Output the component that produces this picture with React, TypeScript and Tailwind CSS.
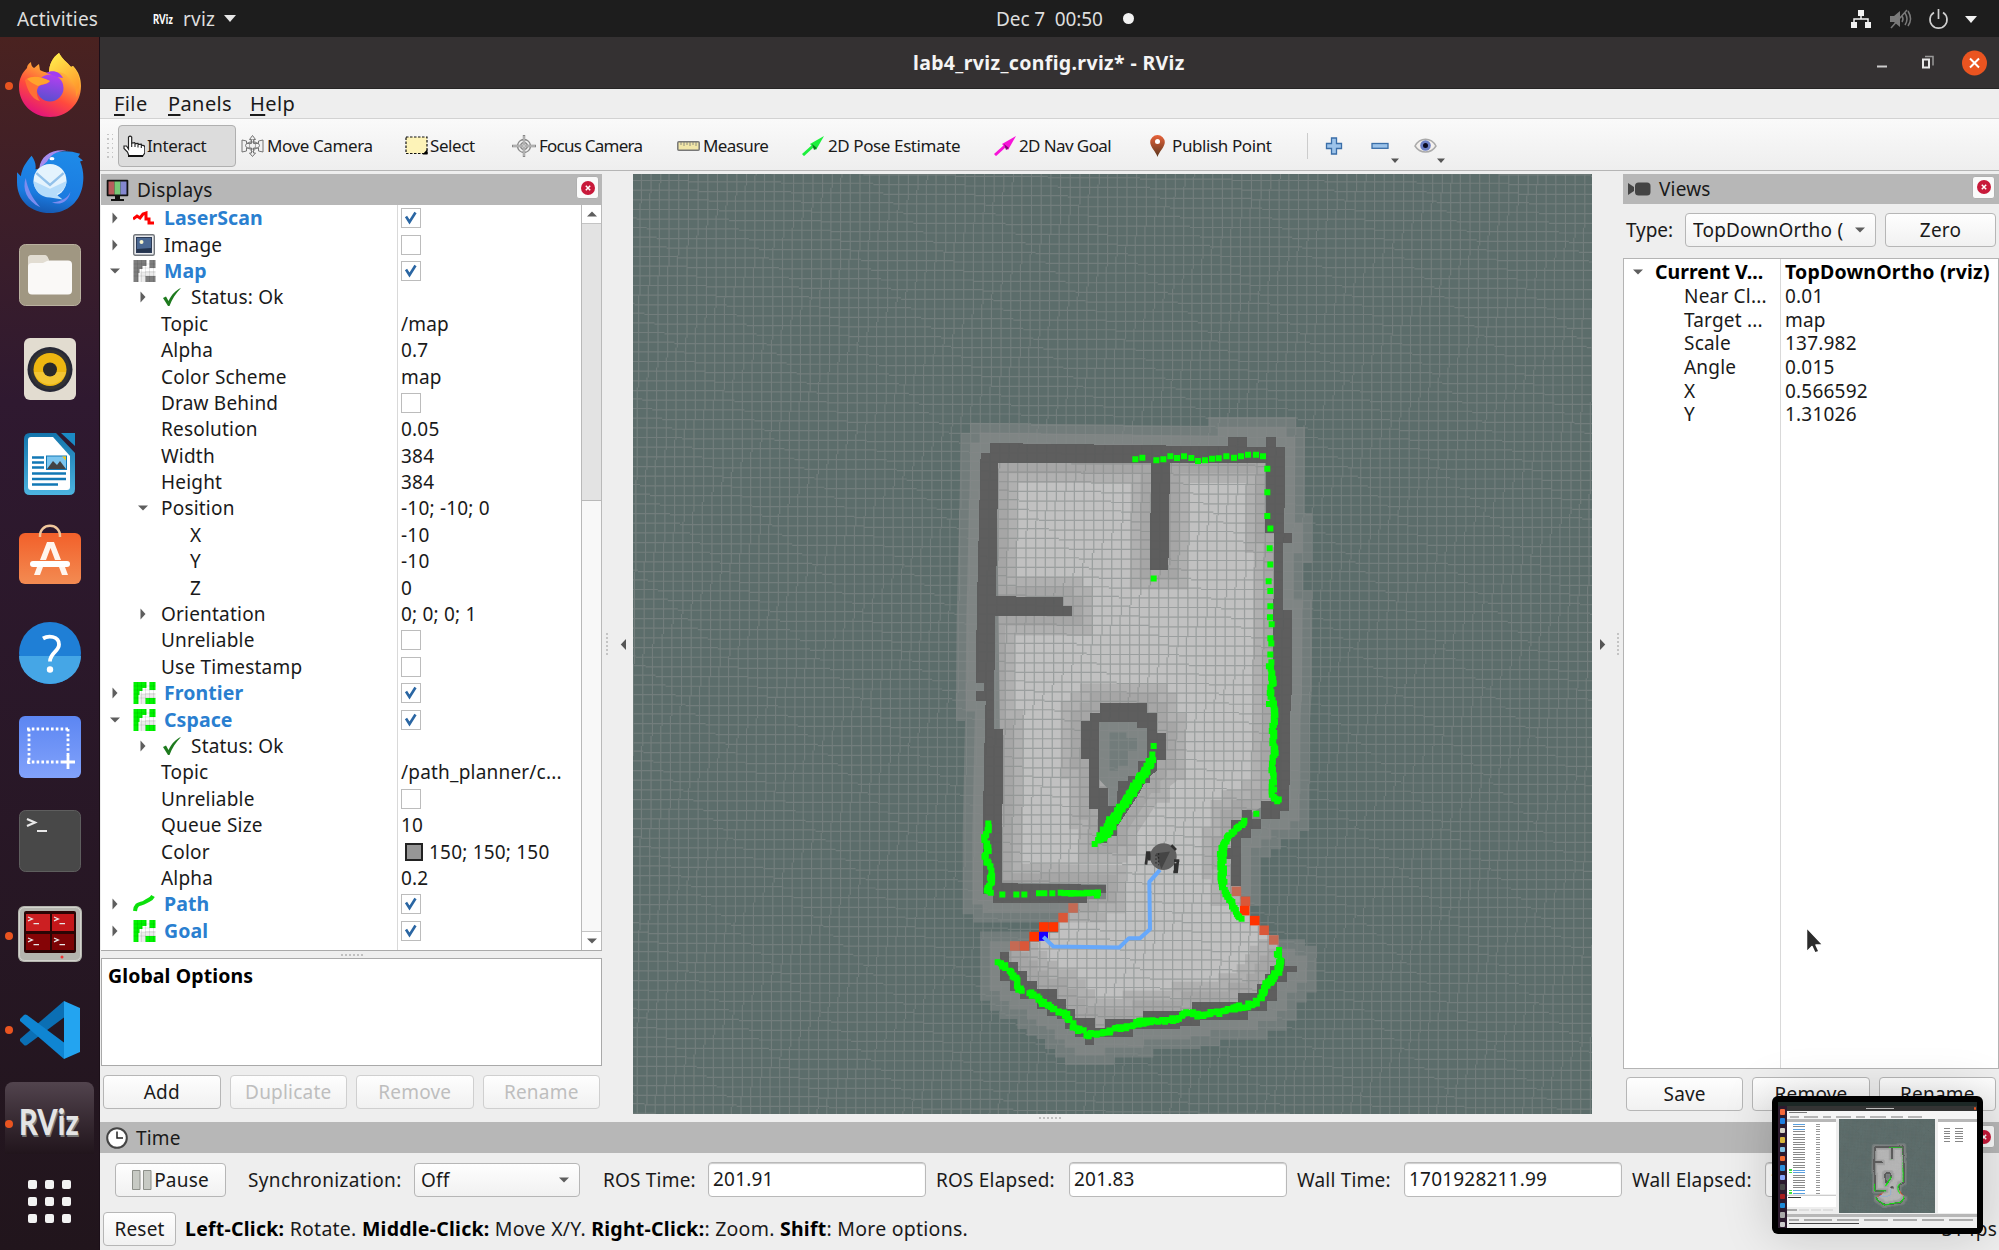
import React from "react";

const LASER_PATHS: { pts: number[][]; step: number; jitter: number }[] = [
  { pts: [[960, 790], [970, 850], [960, 880], [972, 930], [968, 1000], [974, 1060], [968, 1110], [970, 1195], [985, 1205]], step: 7, jitter: 10 },
  { pts: [[115, 1275], [106, 1310], [112, 1350], [105, 1370], [118, 1400], [124, 1440], [112, 1470], [118, 1485]], step: 7, jitter: 10 },
  { pts: [[333, 1482], [380, 1482], [445, 1481], [440, 1490]], step: 9, jitter: 3 },
  { pts: [[607, 1085], [570, 1140], [530, 1200], [490, 1260], [440, 1332]], step: 4, jitter: 16 },
  { pts: [[600, 1092], [555, 1165], [500, 1250], [462, 1318]], step: 4, jitter: 14 },
  { pts: [[885, 1267], [858, 1290], [838, 1308], [822, 1345], [814, 1390], [816, 1450], [830, 1490], [872, 1555]], step: 5, jitter: 8 },
  { pts: [[832, 1315], [815, 1360], [818, 1450]], step: 5, jitter: 14 },
  { pts: [[145, 1686], [195, 1735], [212, 1778]], step: 6, jitter: 10 },
  { pts: [[240, 1780], [290, 1820], [350, 1848], [372, 1880], [415, 1906], [475, 1898], [570, 1870], [690, 1860], [705, 1840], [755, 1850], [850, 1828], [915, 1815], [965, 1745], [993, 1690], [985, 1655]], step: 6, jitter: 12 },
  { pts: [[930, 1800], [950, 1750], [985, 1720]], step: 7, jitter: 8 },
];

const LASER_DOTS = [
  [556, 179], [577, 174], [619, 182], [640, 179], [661, 170], [681, 175], [702, 170], [724, 175], [744, 184], [765, 182],
  [786, 177], [806, 176], [829, 170], [852, 174], [873, 170], [894, 165], [918, 165], [939, 170], [952, 207], [952, 278],
  [952, 349], [961, 387], [959, 446], [961, 495], [956, 545], [961, 574], [961, 620], [960, 653], [965, 674], [961, 716],
  [964, 732], [961, 765], [611, 537], [611, 1040], [607, 1065], [919, 1243], [157, 1486], [199, 1486], [223, 1486],
  [267, 1482], [283, 1482], [307, 1482], [957, 914], [972, 912], [967, 849],
];

function laserSquares() {
  const out: number[][] = [...LASER_DOTS];
  let k = 0;
  for (const { pts, step, jitter } of LASER_PATHS) {
    for (let i = 0; i < pts.length - 1; i++) {
      const [x0, y0] = pts[i];
      const [x1, y1] = pts[i + 1];
      const n = Math.max(1, Math.round(Math.hypot(x1 - x0, y1 - y0) / step));
      for (let j = 0; j <= n; j++) {
        k++;
        const r1 = Math.abs((Math.sin(k * 12.9898) * 43758.5453) % 1) - 0.5;
        const r2 = Math.abs((Math.sin(k * 78.233) * 12543.123) % 1) - 0.5;
        out.push([x0 + ((x1 - x0) * j) / n + r1 * jitter, y0 + ((y1 - y0) * j) / n + r2 * jitter]);
      }
    }
  }
  return out.map(([x, y]) => `M${(x - 9).toFixed(1)} ${(y - 9).toFixed(1)}h18v18h-18z`).join("");
}

const LASER = laserSquares();

/* Lattice lines of a slightly rotated occupancy grid, stepped like unsmoothed raster lines. */
function gridLines() {
  const cell = 28.6;
  const slope = 0.015;
  const q = 4.15;
  const run = q / slope;
  let d = "";
  for (let i = -42; i <= 76; i++) {
    const phase = (((i * cell) / q) % 1) * run;
    for (let y = -1000 + phase - run; y < 2300; y += run) {
      const x = q * Math.round((i * cell - slope * (y + run / 2)) / q);
      d += `M${x.toFixed(1)} ${y.toFixed(1)}v${run.toFixed(1)}`;
    }
  }
  for (let j = -34; j <= 78; j++) {
    const phase = (((-j * cell) / q) % 1) * run;
    for (let x = -1200 + phase - run; x < 2200; x += run) {
      const y = q * Math.round((j * cell + slope * (x + run / 2)) / q);
      d += `M${x.toFixed(1)} ${y.toFixed(1)}h${run.toFixed(1)}`;
    }
  }
  return d;
}
const GRID = gridLines();

const WALLS = [
  "M120 130L835 140V112H892V142H948V112H978V142H1005L1003 400H1027V430H1000V632H1027L1025 880L1020 960L1018 1235H990V1260H933V1205H962L968 960L972 400H946L948 190L145 190L138 590L340 593V620H367V648H135L132 990H160L155 1452L468 1457V1482H410V1510H130V1485H98V1300L105 960L107 905H78V875H103V850H78L80 650L92 160H120Z",
  "M603 188L660 190L655 510H600Z",
  "M450 912H592V940H620V1000H648V1082H620V1115L600 1130V1150H585L560 1195L530 1240L500 1285V1310H472V1330H445V1230H417V1080H392V965H420V940H450ZM447 968H560V985H592V1085H565V1130H535V1145H505V1175H500V1220H475V1167H447Z",
  "M875 1233H905V1260H933V1290H903V1315H872V1460H842V1380H815V1345H842V1262H875Z",
  "M150 1657H178V1690H205V1715H232V1745H262V1770H320V1800H347V1830H375V1858H435V1888H465V1860H578V1835H725V1808H865V1782H920V1755H945V1725H960V1700H985V1680H1005V1700H1040V1720H1010V1750H980V1805H950V1835H893V1862H750V1880H690V1890H550V1915H433V1938H405V1915H375V1890H345V1860H320V1850H290V1830H262V1800H210V1775H180V1745H150Z",
];

const RED = [
  [845, 1462, "#c46a54"], [872, 1492, "#da5738"], [870, 1520, "#ff3300"], [900, 1550, "#ff3300"], [928, 1579, "#da5738"], [957, 1608, "#c46a54"],
  [355, 1512, "#c46a54"], [325, 1541, "#da5738"], [267, 1569, "#ff3300"], [296, 1569, "#ff3300"], [238, 1598, "#ff3300"], [180, 1626, "#c46a54"], [209, 1626, "#da5738"],
] as const;

function MapView({ id, className }: { id: string; className: string }) {
  return (
    <svg viewBox="633 174 959 941" className={className} preserveAspectRatio="none">
      <rect x="633" y="174" width="959" height="941" fill="#5c6d6b" />
      <g transform="translate(950 400) scale(0.33333)">
        <path
          fill="#c1c1c1"
          d="M140 185H945L948 400H974L968 1205L905 1240L845 1300L842 1460H872V1500H900V1550L930 1580L957 1608H985V1680L975 1700L920 1800L865 1830L725 1850L580 1875L465 1900H430L375 1860L345 1820L260 1785L205 1730L178 1690V1655H240V1627H268V1600H325V1570L355 1540H383V1500H468V1455L155 1450Z"
        />
        <path fill="#5c6d6b" d="M447 965H565L592 985V1085L565 1130L520 1180L500 1220L475 1250V1170L447 1140Z" />
        <path transform="translate(120 130)" d={GRID} stroke="#8d9492" strokeOpacity="0.55" strokeWidth="3.6" fill="none" />
        <g opacity="0.38">
          <g fill="#969696" stroke="#969696" strokeWidth="120" strokeLinejoin="miter" strokeMiterlimit="2">
            {WALLS.map((d) => <path key={id + d} d={d} />)}
          </g>
        </g>
        <g opacity="0.36">
          <g fill="#969696" stroke="#969696" strokeWidth="62" strokeLinejoin="miter" strokeMiterlimit="2" fillRule="evenodd">
            {WALLS.slice(1).map((d) => <path key={id + d} d={d} />)}
            <path d={WALLS[0]} />
          </g>
        </g>
        <g fill="#5e5e5e" fillRule="evenodd" shapeRendering="crispEdges">
          {WALLS.map((d) => <path key={id + d} d={d} />)}
          <path d="M1005 400h22v30h-22z" />
        </g>
        <path transform="translate(120 130)" d={GRID} stroke="#505656" strokeOpacity="0.1" strokeWidth="3.6" fill="none" />
        {RED.map(([x, y, c]) => <rect key={x + "-" + y} x={x} y={y} width="28.6" height="28.6" fill={c} />)}
        <rect x="267" y="1598" width="27" height="27" fill="#1a00ff" />
        <path d={LASER} fill="#00ff00" />
        <path d="M630 1412L598 1448L600 1590L570 1617H537L508 1645L310 1642L280 1613" fill="none" stroke="#66a8fb" strokeWidth="12" strokeLinejoin="round" />
        <circle cx="640" cy="1372" r="40" fill="#606060" />
        <path d="M618 1362L660 1357L634 1410Z" fill="#454545" />
        <path d="M618 1366v30M626 1362v36" stroke="#222" strokeWidth="3" strokeDasharray="5 6" />
        <path d="M588 1396l4-36h10M598 1362v22M664 1338l14 14M672 1384h16M684 1380l-4 38h-10M676 1392v24" fill="none" stroke="#303030" strokeWidth="8" />
      </g>
    </svg>
  );
}

/* ---------- dock icons ---------- */

const Firefox = () => (
  <svg viewBox="0 0 64 78" className="-mt-[3px] h-[78px] w-[64px]">
    <defs>
      <linearGradient id="ffb" x1="0.8" y1="0" x2="0.3" y2="1">
        <stop offset="0" stopColor="#fff44f" /><stop offset="0.35" stopColor="#ffa436" /><stop offset="0.65" stopColor="#ff4a3d" /><stop offset="1" stopColor="#e0107f" />
      </linearGradient>
      <linearGradient id="ffp" x1="0.6" y1="0" x2="0.4" y2="1"><stop offset="0" stopColor="#b33ff0" /><stop offset="1" stopColor="#5a4fcf" /></linearGradient>
      <linearGradient id="ffy" x1="0" y1="0" x2="0.5" y2="1"><stop offset="0" stopColor="#fff44f" /><stop offset="1" stopColor="#ff9a2c" /></linearGradient>
    </defs>
    <path d="M41 7c3 6 8 9 12 14l2-1c6 6 8 13 8 20c0 18-14 31-31 31S1 58 1 41c0-8 3-14 8-19c0-2 1-4 4-6c0 3 1 5 3 6c2-1 3-3 5-4l1 6c2 1 7 3 9 3c0-8 3-15 10-20Z" fill="url(#ffb)" />
    <path d="M41 7c3 6 8 9 12 14l2-1c7 8 9 20 3 31c1-10-3-16-8-20c-3-4-7-6-19-4c0-8 3-15 10-20Z" fill="url(#ffy)" />
    <circle cx="32" cy="42" r="13.500" fill="url(#ffp)" />
    <path d="M28 27c7-4 14-1 17 5l-6-1c-4-2-8-3-11-4Z" fill="#a23df0" />
    <path d="M7 34c4-5 14-4 25 1c-3 4-8 3-11 5c-3 4-3 10 1 15c-9-2-13-12-15-21Z" fill="#ff6f35" />
    <path d="M9 33c6-4 15-2 23 2c-4 4-9 3-12 5c-4-2-8-4-11-7Z" fill="#ffa32c" />
  </svg>
);

const Thunderbird = () => (
  <svg viewBox="0 0 70 68" className="h-[66px] w-[68px]">
    <defs><linearGradient id="tb" x1="0.6" y1="0" x2="0.4" y2="1"><stop offset="0" stopColor="#1e8ae8" /><stop offset="0.7" stopColor="#1b7be0" /><stop offset="1" stopColor="#1558b0" /></linearGradient></defs>
    <path d="M66 6l-2 3l5 4l-3 1c3 7 4 14 3 22c-2 19-16 31-34 31C15 67 1 54 1 35V25l4 4c1-8 5-14 11-21c3 4 5 9 4 14l5-1C27 7 44-1 66 6Z" fill="url(#tb)" />
    <path d="M24 21C25 8 38 0 54 3c-12-1-19 5-22 11Z" fill="#a58bee" />
    <path d="M10 31c-4 11 1 24 15 30c-9-10-13-19-15-30ZM56 45c-2 6-9 10-19 11c9 4 18-2 19-11Z" fill="#7c8df0" />
    <circle cx="35" cy="33.500" r="17" fill="#e4f3fd" />
    <path d="M18 34a17 17 0 0 0 17 17l13 2c-4-3-7-5-5-6c6-3 9-8 9-13l-17 8Z" fill="#b5dcfa" />
    <path d="M21 26l14 12l14-12" fill="none" stroke="#92c1ea" strokeWidth="2.400" />
    <ellipse cx="37" cy="11" rx="2.600" ry="1.600" fill="#fff" />
  </svg>
);

const Files = () => (
  <svg viewBox="0 0 62 62" className="h-[62px] w-[62px]">
    <rect x="0.500" y="0.500" width="61" height="61" rx="6" fill="#a09782" stroke="#b9b19f" />
    <path d="M9 15q0-4 4-4h12q3 0 4 3l1 3h20v10H9Z" fill="#e2ddd2" />
    <rect x="9" y="16.500" width="44" height="34" rx="4" fill="#faf9f7" />
    <path d="M9 22V14q0-3 4-3h12q3 0 4 3l1 2-6 3H13q-4 0-4 4Z" fill="#e2ddd2" />
  </svg>
);

const Rhythmbox = () => (
  <svg viewBox="0 0 52 62" className="h-[62px] w-[52px]">
    <rect width="52" height="62" rx="6" fill="#e2dcd0" />
    <circle cx="26" cy="31.500" r="22.500" fill="#272835" /><circle cx="26" cy="31.500" r="20" fill="#333" />
    <circle cx="26" cy="31.500" r="16.500" fill="#eeb710" /><path d="M10 34a16.500 16.500 0 0 0 32 0Z" fill="#f6d04c" opacity="0.6" />
    <circle cx="26" cy="31.500" r="7" fill="#2a2a2a" />
  </svg>
);

const Writer = () => (
  <svg viewBox="0 0 52 62" className="h-[62px] w-[52px]">
    <defs><linearGradient id="wr" x1="0" y1="0" x2="0" y2="1"><stop offset="0" stopColor="#1374ab" /><stop offset="1" stopColor="#4db4e0" /></linearGradient></defs>
    <path d="M6 0H32L51 20V56q0 6-6 6H6q-6 0-6-6V6q0-6 6-6Z" fill="url(#wr)" />
    <path d="M37 0h14v13Z" fill="#1b8ac4" />
    <path d="M7 4H29L46 23V54q0 3-3 3H7q-3 0-3-3V7q0-3 3-3Z" fill="#fff" />
    <path d="M8 24.500h12M8 29.500h12M8 34.500h12M8 40.500h34M8 46h34M8 51.500h26" stroke="#1278b5" strokeWidth="2.400" />
    <rect x="22.500" y="23" width="20" height="13.500" fill="#7cc6ef" stroke="#1278b5" /><path d="M23 36l6-8l4 4l3-4l6 8Z" fill="#444" /><path d="M38 23.500h4v4Z" fill="#f5c518" />
  </svg>
);

const Software = () => (
  <svg viewBox="0 0 62 60" className="-mt-[9px] h-[60px] w-[62px]">
    <defs><linearGradient id="sw" x1="0" y1="0" x2="0" y2="1"><stop offset="0" stopColor="#f2602a" /><stop offset="1" stopColor="#f38b52" /></linearGradient></defs>
    <rect y="9" width="62" height="51" rx="6" fill="url(#sw)" />
    <path d="M21 13C20-2 42-2 41 13" fill="none" stroke="#f0c79c" strokeWidth="2.500" />
    <path d="M28 18h7L42 36h-6l-4.500-12L27 36h-6ZM18 43h6l-3 8h-6ZM40 43h6l3 8h-6Z" fill="#fff5ee" />
    <rect x="11" y="37" width="40" height="6" rx="3" fill="#fff" />
  </svg>
);

const Help = () => (
  <svg viewBox="0 0 62 62" className="h-[62px] w-[62px]">
    <circle cx="31" cy="31" r="31" fill="#1f7fd6" /><path d="M0 34a31 28 0 0 0 62 0Z" fill="#45a6e6" />
    <path d="M24 16.500c5-3 16-3 16 6c0 7-9 8-9 17" fill="none" stroke="#fff" strokeWidth="3.800" /><circle cx="31" cy="47.500" r="3.200" fill="#fff" />
  </svg>
);

const Shot = () => (
  <svg viewBox="0 0 62 62" className="h-[62px] w-[62px]">
    <defs><linearGradient id="sh" x1="0" y1="0" x2="0" y2="1"><stop offset="0" stopColor="#5c86f2" /><stop offset="1" stopColor="#82a2fb" /></linearGradient></defs>
    <rect width="62" height="62" rx="6" fill="url(#sh)" />
    <path d="M8 13H50M10 13V48M49 13V40M8 46H42" stroke="#fff" strokeWidth="2.800" strokeDasharray="2.600 2.200" fill="none" />
    <path d="M49 39v14M42 46h14" stroke="#fff" strokeWidth="2.800" />
  </svg>
);

const Prompt = ({ x, y, s = 1 }: { x: number; y: number; s?: number }) => (
  <path transform={`translate(${x} ${y}) scale(${s})`} d="M0 0l8 3.500l-8 3.500M10 12h10" fill="none" stroke="#e8e8e8" strokeWidth="2.200" />
);

const Terminal = () => (
  <svg viewBox="0 0 62 62" className="h-[62px] w-[62px]">
    <rect x="0.500" y="0.500" width="61" height="61" rx="6" fill="#484848" stroke="#5e5e5e" /><Prompt x={8} y={9} />
  </svg>
);

const Terminator = () => (
  <svg viewBox="0 0 64 56" className="-mt-[4px] h-[56px] w-[64px]">
    <rect width="64" height="56" rx="6" fill="#b4b5ae" /><rect x="1.500" y="1.500" width="61" height="53" rx="5" fill="none" stroke="#d4d4cf" />
    <rect x="6" y="5" width="52" height="42" rx="2" fill="#2b0505" />
    <rect x="8" y="8" width="24" height="17" fill="#cc1f22" /><rect x="34" y="8" width="22" height="17" fill="#c5171a" />
    <rect x="8" y="28" width="24" height="16" fill="#850406" /><rect x="34" y="28" width="22" height="16" fill="#7c0305" />
    <Prompt x={10} y={11} s={0.55} /><Prompt x={36} y={11} s={0.55} /><Prompt x={10} y={32} s={0.55} /><Prompt x={36} y={32} s={0.55} />
    <circle cx="44" cy="51" r="1.500" fill="#e33" />
  </svg>
);

const VsCode = () => (
  <svg viewBox="0 0 60 60" className="h-[60px] w-[60px]">
    <path d="M44 1L0 39q-1 1 0 2l4 4q1 1 3 0L46 16Z" fill="#0b6fb4" />
    <path d="M44 59L0 21q-1-1 0-2l4-4q1-1 3 0L46 44Z" fill="#0f85d2" />
    <path d="M44 1L60 8V52L44 59Z" fill="#23a4f0" />
  </svg>
);

const RvizIcon = () => (
  <svg viewBox="-6 -10 76 60" className="h-[60px] w-[76px]">
    <g fontFamily="Lato" fontWeight="900">
      <text x="2" y="33" fontSize="36" fill="#777" textLength="60" lengthAdjust="spacingAndGlyphs">RViz</text>
      <text x="1" y="31" fontSize="36" fill="#e4e4e4" textLength="60" lengthAdjust="spacingAndGlyphs">RViz</text>
    </g>
  </svg>
);

const DOCK: { el: React.ReactNode; run?: boolean; active?: boolean }[] = [
  { el: <Firefox />, run: true }, { el: <Thunderbird /> }, { el: <Files /> }, { el: <Rhythmbox /> }, { el: <Writer /> }, { el: <Software /> },
  { el: <Help /> }, { el: <Shot /> }, { el: <Terminal /> }, { el: <Terminator />, run: true }, { el: <VsCode />, run: true }, { el: <RvizIcon />, run: true, active: true },
];

function Dock() {
  return (
    <div className="flex h-full w-[100px] shrink-0 flex-col items-center border-r border-[#1b0f18] bg-linear-to-b from-[#4a2220] from-0% via-[#2f1930] via-30% to-[#21151c] pt-[2px]">
      {DOCK.map((d, i) => (
        <div key={i} className="relative flex h-[94.4px] w-full shrink-0 items-center justify-center">
          {d.active && <div className="absolute inset-x-[5px] top-[5px] h-[72px] rounded-t-lg bg-linear-to-b from-[#52444e] to-[#21151c]" />}
          <div className="relative">{d.el}</div>
          {d.run && <div className="absolute left-[5px] top-[43px] size-[8px] rounded-full bg-[#e95420]" />}
        </div>
      ))}
      <div className="mt-[8px] grid grid-cols-3 gap-[8px]">
        {Array.from({ length: 9 }, (_, i) => <div key={i} className="size-[9px] rounded-[2px] bg-[#f2f2f2]" />)}
      </div>
    </div>
  );
}

/* ---------- small widgets ---------- */

const Tri = ({ open, className = "" }: { open?: boolean; className?: string }) => (
  <svg viewBox="0 0 12 12" className={"size-[12px] shrink-0 " + className}>
    <path d={open ? "M1 3.500h10l-5 5z" : "M3.500 0.500v11l5-5.500z"} fill="#5e5e5e" />
  </svg>
);

const Check = ({ on }: { on: boolean }) => (
  <span className="flex size-[20px] items-center justify-center border border-[#bcbcbc] bg-white">
    {on && <svg viewBox="0 0 16 16" className="size-[16px]"><path d="M3 6.500L6.500 12L12.500 2.500" fill="none" stroke="#2a66a3" strokeWidth="2.600" /></svg>}
  </span>
);

const GridIcon = ({ c }: { c: string }) => (
  <svg viewBox="0 0 22 22" className="h-[22px] w-[23px]">
    <path d="M12 11h10v6H12zM9 12h3v10H6v-9z" fill="#ececec" />
    <path d="M0 0h13v6H9v3H6v4H5v9H0zM16 0h6v8h-6zM12 16h10v6H12z" fill={c} />
    <path d="M4 0v22M8 0v22M12 0v22M16 0v22M20 0v22M0 4h22M0 8h22M0 12h22M0 16h22" stroke="#000" strokeOpacity="0.13" strokeWidth="0.700" />
  </svg>
);
const LaserIcon = () => <svg viewBox="0 0 23 14" className="h-[14px] w-[23px]"><path d="M0 8l4-3l3 2l3-4l3-1v6l3 0v4h5" fill="none" stroke="#f00" strokeWidth="3" /></svg>;
const ImageIcon = () => (
  <svg viewBox="0 0 22 22" className="size-[22px]"><rect x="0.700" y="0.700" width="20.600" height="20.600" rx="1.500" fill="#e9ebee" stroke="#73777c" strokeWidth="1.400" /><rect x="3.500" y="3.500" width="15" height="15" fill="#4a6791" stroke="#2b3a56" /><circle cx="8.500" cy="8" r="2" fill="#f7f3ce" /><path d="M4 18v-3l14-1v4z" fill="#24344e" /></svg>
);
const PathIcon = () => <svg viewBox="0 0 22 20" className="h-[20px] w-[22px]"><path d="M2 17C3 8 8 11 12 8S18 6 20 2" fill="none" stroke="#0be00b" strokeWidth="4" /></svg>;
const OkIcon = () => <svg viewBox="0 0 18 18" className="size-[18px]"><path d="M0 10l3-1.500l2.500 4.500C9 6 13 2 18 0C13 5 9 11 6.500 18H5z" fill="#1e7a1e" /></svg>;

const CloseBtn = ({ className = "" }: { className?: string }) => (
  <span className={"flex h-[23px] w-[23px] shrink-0 items-center justify-center rounded-[3px] border border-[#b0b0b0] bg-[#fafafa] " + className}>
    <svg viewBox="0 0 14 14" className="size-[14px]"><circle cx="7" cy="7" r="7" fill="#c8193a" /><path d="M4.800 4.800l4.400 4.400M9.200 4.800l-4.400 4.400" stroke="#fff" strokeWidth="1.500" /></svg>
  </span>
);

const Btn = ({ children, off, className = "" }: { children: React.ReactNode; off?: boolean; className?: string }) => (
  <div className={"flex h-[34px] items-center justify-center rounded-[4px] border bg-linear-to-b from-[#fefefe] to-[#f1f1f1] " + (off ? "border-[#cfcfcf] text-[#bebebe] " : "border-[#b6b6b6] text-[#1a1a1a] ") + className}>
    {children}
  </div>
);

/* ---------- displays tree ---------- */

type Row = { t: string; lvl: number; icon?: React.ReactNode; open?: boolean; arrow?: boolean; link?: boolean; v?: string; chk?: boolean; swatch?: boolean };
const ROWS: Row[] = [
  { t: "LaserScan", lvl: 0, icon: <LaserIcon />, arrow: true, link: true, chk: true },
  { t: "Image", lvl: 0, icon: <ImageIcon />, arrow: true, chk: false },
  { t: "Map", lvl: 0, icon: <GridIcon c="#7d7d7d" />, arrow: true, open: true, link: true, chk: true },
  { t: "Status: Ok", lvl: 1, icon: <OkIcon />, arrow: true },
  { t: "Topic", lvl: 1, v: "/map" },
  { t: "Alpha", lvl: 1, v: "0.7" },
  { t: "Color Scheme", lvl: 1, v: "map" },
  { t: "Draw Behind", lvl: 1, chk: false },
  { t: "Resolution", lvl: 1, v: "0.05" },
  { t: "Width", lvl: 1, v: "384" },
  { t: "Height", lvl: 1, v: "384" },
  { t: "Position", lvl: 1, v: "-10; -10; 0", arrow: true, open: true },
  { t: "X", lvl: 2, v: "-10" },
  { t: "Y", lvl: 2, v: "-10" },
  { t: "Z", lvl: 2, v: "0" },
  { t: "Orientation", lvl: 1, v: "0; 0; 0; 1", arrow: true },
  { t: "Unreliable", lvl: 1, chk: false },
  { t: "Use Timestamp", lvl: 1, chk: false },
  { t: "Frontier", lvl: 0, icon: <GridIcon c="#00f400" />, arrow: true, link: true, chk: true },
  { t: "Cspace", lvl: 0, icon: <GridIcon c="#00f400" />, arrow: true, open: true, link: true, chk: true },
  { t: "Status: Ok", lvl: 1, icon: <OkIcon />, arrow: true },
  { t: "Topic", lvl: 1, v: "/path_planner/c..." },
  { t: "Unreliable", lvl: 1, chk: false },
  { t: "Queue Size", lvl: 1, v: "10" },
  { t: "Color", lvl: 1, v: "150; 150; 150", swatch: true },
  { t: "Alpha", lvl: 1, v: "0.2" },
  { t: "Path", lvl: 0, icon: <PathIcon />, arrow: true, link: true, chk: true },
  { t: "Goal", lvl: 0, icon: <GridIcon c="#00f400" />, arrow: true, link: true, chk: true },
];

const PAD = ["pl-[8px]", "pl-[36px]", "pl-[64px]"];

function TreeRow({ r }: { r: Row }) {
  return (
    <div className="flex h-[26.4px] items-center">
      <div className={"flex h-full w-[297px] shrink-0 items-center border-r border-[#d9d9d9] " + PAD[r.lvl]}>
        <span className="flex w-[13px] shrink-0">{r.arrow && <Tri open={r.open} />}</span>
        {r.lvl === 0 && <span className="ml-[11px] flex w-[31px] shrink-0">{r.icon}</span>}
        {r.lvl === 1 && <span className={"ml-[11px] flex shrink-0 " + (r.icon ? "w-[30px] pl-[2px]" : "w-0")}>{r.icon}</span>}
        {r.lvl === 2 && <span className="w-[12px]" />}
        <span className={r.link ? "text-[19.5px] font-bold tracking-[0.1px] text-[#2a7fd0]" : ""}>{r.t}</span>
      </div>
      <div className="flex items-center whitespace-nowrap pl-[3px]">
        {r.chk !== undefined && <Check on={r.chk} />}
        {r.swatch && <span className="ml-[4px] mr-[6px] size-[18px] border-2 border-[#222] bg-[#969696]" />}
        {r.v}
      </div>
    </div>
  );
}

function Displays() {
  return (
    <div className="flex w-[501px] shrink-0 flex-col">
      <div className="flex h-[31px] shrink-0 items-center bg-[#b7b7b7] pl-[5px] pr-[3px]">
        <svg viewBox="0 0 23 22" className="h-[22px] w-[23px]">
          <rect x="0.700" y="0.700" width="21.600" height="16.600" rx="1" fill="#111" /><rect x="2.500" y="2.500" width="6" height="13" fill="#b75c5c" /><rect x="8.500" y="2.500" width="6" height="13" fill="#76c876" /><rect x="14.500" y="2.500" width="6" height="13" fill="#8487cf" /><path d="M9 17h5v3h4v2H5v-2h4z" fill="#111" />
        </svg>
        <span className="ml-[8px] flex-1">Displays</span>
        <CloseBtn className="-mt-[4px]" />
      </div>
      <div className="flex h-[746px] shrink-0 border-b border-[#a9a9a9] bg-white">
        <div className="w-[480px] overflow-hidden">
          <div className="h-[739.200px]">{ROWS.map((r, i) => <TreeRow key={i} r={r} />)}</div>
          <div className="h-[8px] w-[297px] border-r border-[#d9d9d9]" />
        </div>
        <div className="flex flex-1 flex-col border-x border-[#b9b9b9] bg-[#f8f8f8]">
          <div className="flex h-[19px] items-center justify-center border-b border-[#c4c4c4] bg-white"><Tri open className="rotate-180" /></div>
          <div className="h-[277px] border-b border-[#b9b9b9] bg-[#e3e3e3]" />
          <div className="flex-1" />
          <div className="flex h-[19px] items-center justify-center border-t border-[#c4c4c4] bg-white"><Tri open /></div>
        </div>
      </div>
      <div className="flex h-[7px] items-center justify-center gap-[2px]">{Array.from({ length: 6 }, (_, i) => <i key={i} className="size-[2px] bg-[#c0c0c0]" />)}</div>
      <div className="h-[108px] shrink-0 border border-[#a9a9a9] bg-white px-[6px] pt-[5px] text-[19.5px] font-bold tracking-[0.1px] text-black">Global Options</div>
      <div className="flex gap-[9px] pl-[2px] pr-[2px] pt-[9px]">
        <Btn className="flex-1">Add</Btn><Btn off className="flex-1">Duplicate</Btn><Btn off className="flex-1">Remove</Btn><Btn off className="flex-1">Rename</Btn>
      </div>
    </div>
  );
}

const VIEW_ROWS = [["Near Cl...", "0.01"], ["Target ...", "map"], ["Scale", "137.982"], ["Angle", "0.015"], ["X", "0.566592"], ["Y", "1.31026"]];

function Views() {
  return (
    <div className="flex w-[376px] shrink-0 flex-col">
      <div className="flex h-[30px] shrink-0 items-center bg-[#b7b7b7] pl-[5px] pr-[4px]">
        <svg viewBox="0 0 23 14" className="h-[14px] w-[23px]"><path d="M0 1l6 4V9L0 13z" fill="#444" /><rect x="7" y="0.500" width="15.500" height="13" rx="3.500" fill="#444" /></svg>
        <span className="ml-[8px] flex-1">Views</span>
        <CloseBtn className="-mt-[4px]" />
      </div>
      <div className="mt-[9px] flex items-center pl-[3px] pr-[3px]">
        <span className="w-[59px] tracking-[-0.1px]">Type:</span>
        <Btn className="w-[191px] pl-[7px] pr-[9px]"><span className="w-[154px] overflow-hidden whitespace-nowrap">TopDownOrtho (</span><Tri open className="ml-auto" /></Btn>
        <Btn className="ml-[9px] flex-1">Zero</Btn>
      </div>
      <div className="mt-[11px] flex h-[811px] shrink-0 border border-[#b4b4b4] bg-white">
        <div className="w-[157px] border-r border-[#d9d9d9] pt-[1px]">
          <div className="flex h-[24.500px] items-center whitespace-nowrap pl-[8px] text-[19.5px] font-bold tracking-[0px] text-black"><Tri open /><span className="ml-[11px]">Current V...</span></div>
          {VIEW_ROWS.map((r) => <div key={r[0]} className="flex h-[23.600px] items-center pl-[60px]">{r[0]}</div>)}
        </div>
        <div className="pl-[4px] pt-[1px]">
          <div className="flex h-[24.500px] items-center whitespace-nowrap text-[19.5px] font-bold tracking-[0.2px] text-black">TopDownOrtho (rviz)</div>
          {VIEW_ROWS.map((r) => <div key={r[0]} className="flex h-[23.600px] items-center">{r[1]}</div>)}
        </div>
      </div>
      <div className="mt-[8px] flex gap-[9px] pl-[3px] pr-[3px]">
        <Btn className="flex-1">Save</Btn><Btn className="flex-1">Remove</Btn><Btn className="flex-1">Rename</Btn>
      </div>
    </div>
  );
}

function Handle({ side }: { side: "l" | "r" }) {
  const dots = <div className="flex flex-col gap-[2px]">{Array.from({ length: 6 }, (_, i) => <i key={i} className="size-[2px] bg-[#c4c4c4]" />)}</div>;
  return (
    <div className={"flex shrink-0 items-center justify-between " + (side === "l" ? "w-[31px] pl-[4px] pr-[7px]" : "w-[31px] pl-[8px] pr-[4px]")}>
      {side === "l" && dots}
      <svg viewBox="0 0 8 10" className={"h-[11px] w-[6px] " + (side === "l" ? "" : "-scale-x-100")} preserveAspectRatio="none"><path d="M8 0v10L1 5z" fill="#555" /></svg>
      {side === "r" && dots}
    </div>
  );
}

/* ---------- toolbar ---------- */

const arrowIcon = (a: string, b: string) => (
  <svg viewBox="0 0 22 20" className="h-[20px] w-[22px]"><path d="M1 19L11 10" stroke={a} strokeWidth="3" /><path d="M8 8L22 0L14 14z" fill={a} /><path d="M10 8l5 4l-3 2z" fill={b} /></svg>
);

function Toolbar() {
  const tool = (w: string, icon: React.ReactNode, label: string, gap: string) => (
    <div className={"flex items-center " + w}>{icon}<span className={gap + " whitespace-nowrap"}>{label}</span></div>
  );
  return (
    <div className="flex h-[53px] shrink-0 items-center border-b border-t border-b-[#b5b5b5] border-t-[#d2d2d2] bg-linear-to-b from-[#fafafa] to-[#eeeeee] pt-[2px] text-[17px] tracking-[-0.4px]">
      <div className="ml-[7px] grid grid-cols-2 gap-[3px]">{Array.from({ length: 12 }, (_, i) => <i key={i} className="size-[1.500px] bg-[#c6c6c6]" />)}</div>
      <div className="ml-[5px] flex h-[42px] w-[118px] items-center rounded-[4px] border border-[#b0b0b0] bg-[#dcdcdc] pl-[4px]">
        <svg viewBox="0 0 22 22" className="size-[22px]">
          <path d="M5.500 14V2.200q1.600-2.200 3.200 0V8l3-0.300l0.500 1l2.800-0.300l0.500 1l2.800-0.200l0.500 1.200q2.500-0.500 3 1.600v6l-2 3H6l-1.500-4L1 13.500V11h2.500z" fill="#fff" stroke="#222" strokeWidth="1.200" />
          <path d="M8.700 8v4M12 9v3M15 9.500v3M18.300 10v3" stroke="#222" strokeWidth="1.100" /><path d="M5 21h15" stroke="#111" strokeWidth="2" />
        </svg>
        <span className="ml-[2px]">Interact</span>
      </div>
      {tool("ml-[5px] w-[164px]", (
        <svg viewBox="0 0 23 22" className="h-[22px] w-[23px]">
          <path d="M11.500 0.500l3 4h-2v4h5V6l4.500-1v12l-4.500-1v-3h-5v5h2l-3 3.500l-3-3.500h2v-5h-5v3L1 17V5l4.500 1v2.500h5v-4h-2z" fill="#f2f2f2" stroke="#666" strokeWidth="0.900" /><ellipse cx="11.500" cy="10.500" rx="7" ry="3.500" fill="none" stroke="#777" /><ellipse cx="11.500" cy="10.500" rx="3" ry="6" fill="none" stroke="#888" strokeWidth="0.800" />
        </svg>
      ), "Move Camera", "ml-[3px]")}
      {tool("w-[107px]", <svg viewBox="0 0 23 19" className="h-[19px] w-[23px]"><rect x="1" y="1" width="21" height="16.500" fill="#fdf3b8" stroke="#111" strokeWidth="1.200" strokeDasharray="2.500 1.500" /><path d="M22.500 13v5.500h-5z" /></svg>, "Select", "ml-[2px]")}
      {tool("w-[165px]", (
        <svg viewBox="0 0 24 22" className="h-[22px] w-[24px]"><g fill="none" stroke="#888" strokeWidth="1.300"><circle cx="12" cy="11" r="6.500" /><circle cx="12" cy="11" r="3.300" /><path d="M12 0v22M0 11h24" strokeWidth="2.400" /></g><path d="M12 1v20M1 11h22" stroke="#eee" strokeWidth="0.800" /></svg>
      ), "Focus Camera", "ml-[3px] tracking-[-0.75px]")}
      {tool("w-[125px]", <svg viewBox="0 0 23 10" className="h-[10px] w-[23px]"><rect x="0.800" y="0.800" width="21.400" height="8.400" rx="1" fill="#f1e6a8" stroke="#777" strokeWidth="1.500" /><path d="M4 1v3M7 1v4M10 1v3M13 1v4M16 1v3M19 1v4" stroke="#777" strokeWidth="0.800" /></svg>, "Measure", "ml-[3px] tracking-[-0.6px]")}
      {tool("w-[192px]", arrowIcon("#1cf03c", "#0a7a1c"), "2D Pose Estimate", "ml-[4px]")}
      {tool("w-[156px]", arrowIcon("#f714d8", "#84087a"), "2D Nav Goal", "ml-[3px] tracking-[-0.6px]")}
      {tool("w-[157px]", <svg viewBox="0 0 15 22" className="h-[22px] w-[15px]"><defs><linearGradient id="pin" x1="0" y1="0" x2="0" y2="1"><stop offset="0" stopColor="#e8623a" /><stop offset="1" stopColor="#59371e" /></linearGradient></defs><path d="M7.500 0a7.300 7.300 0 0 1 7.300 7.300C14.800 12 9 17 7.500 22C6 17 0.200 12 0.200 7.300A7.300 7.300 0 0 1 7.500 0z" fill="url(#pin)" /><circle cx="7.500" cy="6.500" r="2.500" fill="#fff" /></svg>, "Publish Point", "ml-[7px]")}
      <div className="h-[26px] w-px bg-[#cccccc]" />
      <svg viewBox="0 0 150 42" className="ml-[8px] h-[42px] w-[150px]">
        <path d="M15.500 13h5v5.500h5v5h-5V29h-5v-5.500h-5v-5h5z" fill="#9cc3ea" stroke="#3a6ea8" strokeWidth="1.300" />
        <rect x="56" y="18.500" width="16" height="4.800" fill="#9cc3ea" stroke="#3a6ea8" strokeWidth="1.300" />
        <path d="M75 33.500h8l-4 4.500zM121 33.500h8l-4 4.500z" fill="#555" />
        <path d="M99 21c5-9 16-9 21 0c-5 8-16 8-21 0z" fill="#f4f1ee" stroke="#aaa" strokeWidth="1.500" /><circle cx="109.500" cy="20.500" r="5.300" fill="#6c7fc4" /><circle cx="109.500" cy="20.500" r="2.500" fill="#0a0a20" />
      </svg>
    </div>
  );
}

/* ---------- thumbnail ---------- */

function Thumb() {
  return (
    <div className="absolute left-[1772px] top-[1096px] h-[138px] w-[211px] rounded-[6px] bg-black p-[6px] shadow-[0_0_50px_rgba(0,0,0,0.18)]">
      <div className="flex h-full w-full flex-col overflow-hidden bg-[#eee]">
        <div className="h-[4px] shrink-0 bg-[#1d2826]" />
        <div className="flex min-h-0 flex-1">
          <div className="flex w-[9px] shrink-0 flex-col items-center gap-[3.900px] bg-[#2c1a2e] pt-[3px]">
            {["bg-[#f4683a]", "bg-[#1f7fe0]", "bg-[#d8d4c8]", "bg-[#d9b53a]", "bg-[#7fc0e4]", "bg-[#f2692f]", "bg-[#2b8fdd]", "bg-[#86a4fa]", "bg-[#484848]", "bg-[#a81c1c]", "bg-[#1f8ad8]", "bg-[#aaa]", "bg-[#ccc]"].map((c, i) => <i key={i} className={"size-[5.500px] shrink-0 rounded-[1px] " + c} />)}
          </div>
          <div className="flex min-w-0 flex-1 flex-col">
            <div className="flex h-[5px] shrink-0 items-center justify-center bg-[#333]"><i className="ml-auto h-px w-[28px] bg-[#bbb]" /><i className="ml-auto mr-[1px] size-[2.500px] rounded-full bg-[#e95420]" /></div>
            <div className="flex h-[8px] shrink-0 flex-col justify-around bg-[#f5f5f5]">
              <i className="ml-[2px] h-px w-[18px] bg-[#777]" />
              <div className="flex gap-[5px] pl-[3px]">{[9, 14, 8, 15, 9, 16, 12, 14].map((w, i) => <i key={i} className="h-[1.500px] bg-[#b5b5b5]" style={{ width: w }} />)}</div>
            </div>
            <div className="flex h-[94px] shrink-0">
              <div className="flex w-[49px] shrink-0 flex-col">
                <div className="h-[75px] border-t-[3px] border-[#b7b7b7] bg-white pl-[2px] pt-px">
                  {ROWS.map((r, i) => (
                    <div key={i} className="flex h-[2.550px] items-center gap-[1px]">
                      <i className={"h-[1.500px] w-[3px] " + (r.lvl === 0 && i > 2 ? "bg-[#3fe03f]" : "bg-transparent")} />
                      <i className={"h-[1px] w-[12px] " + (r.link ? "bg-[#5aa0e0]" : "bg-[#8a8a8a]")} />
                      <i className="ml-[10px] h-[1px] w-[4px] bg-[#999]" />
                    </div>
                  ))}
                </div>
                <div className="mt-px h-[12px] border-t border-[#ccc] bg-white pl-[1px] pt-[1px]"><i className="block h-px w-[13px] bg-[#333]" /></div>
                <div className="mt-[2px] flex gap-[2px]"><i className="h-[2px] w-[10px] bg-[#aaa]" /><i className="h-[2px] w-[10px] bg-[#ddd]" /><i className="h-[2px] w-[10px] bg-[#ddd]" /><i className="h-[2px] w-[10px] bg-[#ddd]" /></div>
              </div>
              <MapView id="thumb" className="ml-[3px] h-[94px] w-[96px] shrink-0" />
              <div className="ml-[3px] min-w-0 flex-1 border-t-[3px] border-[#b7b7b7] bg-white pl-[6px] pt-[6px]">
                {VIEW_ROWS.map((r) => <div key={r[0]} className="flex h-[2.600px] gap-[5px]"><i className="h-[1px] w-[6px] bg-[#888]" /><i className="h-[1px] w-[8px] bg-[#888]" /></div>)}
              </div>
            </div>
            <div className="mt-[1px] h-[3px] shrink-0 bg-[#b7b7b7]" />
            <div className="mt-[2px] flex gap-[5px] pl-[2px]">{[10, 28, 22, 24, 24, 22, 24].map((w, i) => <i key={i} className="h-[1.500px] bg-[#aaa]" style={{ width: w }} />)}</div>
            <div className="ml-[2px] mt-[2px] h-[1px] w-[70px] bg-[#444]" />
          </div>
        </div>
      </div>
    </div>
  );
}

const Pointer = () => (
  <svg viewBox="0 0 19 28" className="absolute left-[1805px] top-[926px] h-[28px] w-[19px]">
    <path d="M1.500 1.500V26l5.500-5.500l3 6.500l4-1.500l-3-6.500h7z" fill="#2b2b2b" stroke="#fff" strokeWidth="1.500" strokeLinejoin="round" />
  </svg>
);

const Field = ({ v }: { v: string }) => (
  <div className="flex h-[35px] w-[218px] shrink-0 items-center rounded-[4px] border border-[#b9b9b9] bg-white pb-[2px] pl-[4px] shadow-[inset_0_1px_1px_#ccc]">{v}</div>
);

export default function App() {
  return (
    <div className="relative flex h-[1250px] w-[1999px] flex-col overflow-hidden bg-[#eeeeee] font-['Noto_Sans',sans-serif] text-[19px] leading-[24px] tracking-[0.2px] text-[#1a1a1a]">
      <div className="flex h-[37px] shrink-0 items-center bg-[#1d1d1d] text-[#dedede]">
        <span className="ml-[17px] w-[134px]">Activities</span>
        <svg viewBox="-2 -4 26 20" className="h-[20px] w-[26px]"><text x="0" y="11" fontFamily="Lato" fontWeight="900" fontSize="13" fill="#fff" textLength="20" lengthAdjust="spacingAndGlyphs">RViz</text></svg>
        <span className="ml-[6px] w-[34px]">rviz</span>
        <svg viewBox="0 0 12 7" className="ml-[7px] h-[7px] w-[12px]"><path d="M0 0h12l-6 7z" fill="#e6e6e6" /></svg>
        <span className="ml-[760px] w-[127px] whitespace-pre tracking-[-0.1px]">Dec 7  00:50</span>
        <i className="size-[11px] rounded-full bg-[#f2f2f2]" />
        <svg viewBox="0 0 130 24" className="ml-auto mr-[20px] h-[24px] w-[130px]">
          <path d="M9 3h6v6h-6zM2 15h6v6H2zM16 15h6v6h-6z" fill="#f2f2f2" /><path d="M12 8v4M5 16v-4h14v4" fill="none" stroke="#f2f2f2" strokeWidth="1.500" />
          <path d="M41 9h4l6-5v16l-6-5h-4z" fill="#7a7a7a" /><path d="M53 9q2 3 0 6M56 6q4 6 0 12M59 4q5 8 0 15M42 21L58 3" fill="none" stroke="#7a7a7a" strokeWidth="1.500" />
          <path d="M85 5.500a8.500 8.500 0 1 0 9 0M89.500 2v10" fill="none" stroke="#cfcfcf" strokeWidth="1.700" />
          <path d="M116 9h12l-6 7z" fill="#f2f2f2" />
        </svg>
      </div>
      <div className="flex min-h-0 flex-1">
        <Dock />
        <div className="flex min-w-0 flex-1 flex-col">
          <div className="flex h-[52px] shrink-0 items-center border-b border-[#262525] bg-[#343132] pl-[813px]">
            <span className="whitespace-nowrap text-[19.5px] font-bold tracking-[0.35px] text-[#f4f4f4]">lab4_rviz_config.rviz* - RViz</span>
            <svg viewBox="0 0 110 26" className="ml-auto mr-[12px] h-[26px] w-[110px]">
              <path d="M-1 16.500h11" stroke="#ccc" strokeWidth="2" /><path d="M46 9.500h6v8h-6z" fill="none" stroke="#e8e8e8" strokeWidth="2" /><path d="M48 6.500h8v9" fill="none" stroke="#999" strokeWidth="1.500" />
              <circle cx="97.500" cy="13" r="12.500" fill="#ea5420" /><path d="M93 8.500l9 9M102 8.500l-9 9" stroke="#fff" strokeWidth="2" />
            </svg>
          </div>
          <div className="flex h-[29px] shrink-0 items-center pl-[14px] text-[20px] tracking-[0.4px] underline-offset-[3px]">
            {["File", "Panels", "Help"].map((m, i) => <span key={m} className={i === 0 ? "w-[54px]" : "w-[82px]"}><u className="decoration-2">{m[0]}</u>{m.slice(1)}</span>)}
          </div>
          <Toolbar />
          <div className="mt-[3px] flex h-[940px] shrink-0 pl-px">
            <Displays />
            <Handle side="l" />
            <MapView id="main" className="h-[940px] w-[959px] shrink-0" />
            <Handle side="r" />
            <Views />
          </div>
          <div className="flex h-[8px] shrink-0 items-center justify-center gap-[2px]">{Array.from({ length: 6 }, (_, i) => <i key={i} className="size-[2px] bg-[#c0c0c0]" />)}</div>
          <div className="flex h-[31px] shrink-0 items-center bg-[#b7b7b7] pl-[6px]">
            <svg viewBox="0 0 22 22" className="size-[22px]"><circle cx="11" cy="11" r="9.800" fill="#fff" stroke="#444" strokeWidth="2" /><path d="M11 4.500V11h6" fill="none" stroke="#222" strokeWidth="1.500" /></svg>
            <span className="ml-[8px] flex-1">Time</span>
            <CloseBtn className="-mt-[2px] mr-[4px]" />
          </div>
          <div className="mt-[9px] flex h-[35px] shrink-0 items-center">
            <Btn className="ml-[15px] w-[111px]">
              <svg viewBox="0 0 20 20" className="h-[20px] w-[20px]"><path d="M0.500 0.500h7.500v19H0.500zM11.500 0.500H19v19h-7.500z" fill="#c7cac4" stroke="#8d908a" /></svg>
              <span className="ml-[2px]">Pause</span>
            </Btn>
            <span className="ml-[22px] w-[166px] tracking-[0.35px]">Synchronization:</span>
            <Btn className="w-[166px] pl-[6px] pr-[9px]"><span className="flex-1">Off</span><Tri open /></Btn>
            <span className="ml-[23px] w-[105px]">ROS Time:</span><Field v="201.91" />
            <span className="ml-[10px] w-[133px] whitespace-nowrap">ROS Elapsed:</span><Field v="201.83" />
            <span className="ml-[10px] w-[107px] whitespace-nowrap">Wall Time:</span><Field v="1701928211.99" />
            <span className="ml-[10px] w-[133px] whitespace-nowrap">Wall Elapsed:</span><Field v="1701928211.91" />
          </div>
          <div className="mt-[15px] flex h-[33px] shrink-0 items-center">
            <Btn className="ml-[3px] w-[73px]">Reset</Btn>
            <span className="ml-[9px] whitespace-nowrap text-[19.5px] tracking-[0.25px] [&>b]:text-black"><b>Left-Click:</b> Rotate. <b>Middle-Click:</b> Move X/Y. <b>Right-Click:</b>: Zoom. <b>Shift</b>: More options.</span>
            <span className="ml-auto mr-[2px]">31 fps</span>
          </div>
        </div>
      </div>
      <Pointer />
      <Thumb />
    </div>
  );
}
